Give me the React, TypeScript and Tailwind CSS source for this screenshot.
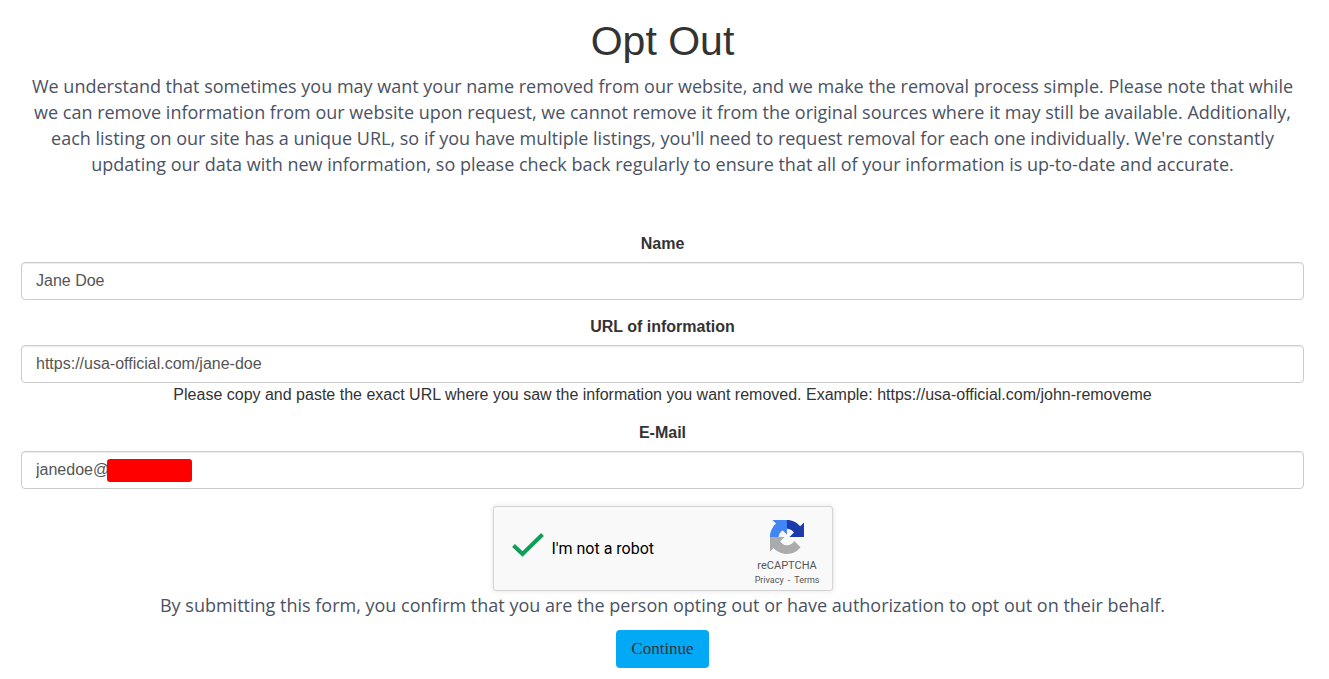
import { useState } from "react";

const inputClass =
  "h-[38px] w-full rounded border border-[#ccc] bg-white px-3.5 text-base text-[#555] shadow-[inset_0_1px_1px_rgba(0,0,0,0.075)] outline-none focus:border-[#66afe9]";
const labelClass = "mb-1.5 text-base leading-6 font-bold";
const textClass = "font-['Open_Sans',sans-serif] text-lg leading-[26px] text-[#4a5264]";

function CaptchaLogo() {
  return (
    <svg viewBox="0 0 64 64" className="h-[34px] w-[34px]" aria-hidden="true">
      <path
        fill="#1c3aa9"
        d="M64 31.955l-.033-1.37V4.687l-7.16 7.16C50.948 4.674 42.033.093 32.05.093c-10.4 0-19.622 4.96-25.458 12.64l11.736 11.86a15.55 15.55 0 0 1 4.754-5.334c2.05-1.6 4.952-2.906 8.968-2.906.485 0 .86.057 1.135.163 4.976.393 9.288 3.14 11.828 7.124l-8.307 8.307L64 31.953"
      />
      <path
        fill="#4285f4"
        d="M31.862.094l-1.37.033H4.594l7.16 7.16C4.58 13.147 0 22.06 0 32.046c0 10.4 4.96 19.622 12.64 25.458L24.5 45.768a15.55 15.55 0 0 1-5.334-4.754c-1.6-2.05-2.906-4.952-2.906-8.968 0-.485.057-.86.163-1.135.393-4.976 3.14-9.288 7.124-11.828l8.307 8.307L31.86.095"
      />
      <path
        fill="#ababab"
        d="M.001 32.045l.033 1.37v25.898l7.16-7.16c5.86 7.173 14.774 11.754 24.76 11.754 10.4 0 19.622-4.96 25.458-12.64l-11.736-11.86a15.55 15.55 0 0 1-4.754 5.334c-2.05 1.6-4.952 2.906-8.968 2.906-.485 0-.86-.057-1.135-.163-4.976-.393-9.288-3.14-11.828-7.124l8.307-8.307c-10.522.04-22.4.066-27.295-.005"
      />
    </svg>
  );
}

function Captcha() {
  const [checked, setChecked] = useState(true);

  return (
    <div className="flex h-[85px] w-[340px] items-center justify-between rounded-[3px] border border-[#d3d3d3] bg-[#f9f9f9] pr-3 pl-[18px] font-[Roboto,sans-serif] shadow-[0_0_4px_1px_rgba(0,0,0,0.08)]">
      <label htmlFor="robot" className="flex items-center gap-2 text-base leading-5 text-black">
        <span className="grid h-8 w-8 place-items-center">
          <input
            id="robot"
            type="checkbox"
            checked={checked}
            onChange={(e) => setChecked(e.target.checked)}
            className="col-start-1 row-start-1 h-7 w-7 appearance-none rounded-xs border-2 border-[#c1c1c1] bg-white checked:border-0 checked:bg-transparent"
          />
          {checked && (
            <svg viewBox="0 0 32 32" className="pointer-events-none col-start-1 row-start-1 h-8 w-8">
              <path d="M1.5 12.5 10.5 21 30.5 1.5" fill="none" stroke="#0f9d58" strokeWidth="4" />
            </svg>
          )}
        </span>
        I'm not a robot
      </label>
      <div className="flex flex-col items-center pt-2 text-[#555]">
        <CaptchaLogo />
        <span className="mt-1 text-[11px] leading-4">reCAPTCHA</span>
        <span className="flex gap-1 text-[9px] leading-3">
          <a href="#privacy">Privacy</a>
          <span>-</span>
          <a href="#terms">Terms</a>
        </span>
      </div>
    </div>
  );
}

export default function App() {
  const [name, setName] = useState("Jane Doe");
  const [url, setUrl] = useState("https://usa-official.com/jane-doe");
  const [email, setEmail] = useState("janedoe@");

  return (
    <main className="pt-4 pr-[25px] pb-3 pl-[21px] text-center font-['Liberation_Sans',Arial,sans-serif] text-[#333]">
      <h1 className="mb-[7px] text-[41px] leading-[50px]">Opt Out</h1>
      <p className={textClass}>
        We understand that sometimes you may want your name removed from our website, and we make the removal process
        simple. Please note that while we can remove information from our website upon request, we cannot remove it from
        the original sources where it may still be available. Additionally, each listing on our site has a unique URL, so
        if you have multiple listings, you'll need to request removal for each one individually. We're constantly
        updating our data with new information, so please check back regularly to ensure that all of your information is
        up-to-date and accurate.
      </p>

      <form className="mt-[55px] flex flex-col gap-[15px]" onSubmit={(e) => e.preventDefault()}>
        <div className="flex flex-col">
          <label htmlFor="name" className={labelClass}>
            Name
          </label>
          <input id="name" type="text" value={name} onChange={(e) => setName(e.target.value)} className={inputClass} />
        </div>

        <div className="flex flex-col">
          <label htmlFor="url" className={labelClass}>
            URL of information
          </label>
          <input id="url" type="text" value={url} onChange={(e) => setUrl(e.target.value)} className={inputClass} />
          <p className="text-base leading-[23px]">
            Please copy and paste the exact URL where you saw the information you want removed. Example:
            https://usa-official.com/john-removeme
          </p>
        </div>

        <div className="flex flex-col">
          <label htmlFor="email" className={labelClass}>
            E-Mail
          </label>
          <div className="relative">
            <input
              id="email"
              type="text"
              value={email}
              onChange={(e) => setEmail(e.target.value)}
              className={inputClass}
            />
            <span className="absolute top-2 left-[86px] h-[23px] w-[85px] rounded-[3px] bg-[#f00]" />
          </div>
        </div>

        <div className="flex flex-col items-center pt-0.5">
          <Captcha />
          <p className={`mt-px ${textClass}`}>
            By submitting this form, you confirm that you are the person opting out or have authorization to opt out on
            their behalf.
          </p>
          <button
            type="submit"
            className="mt-3 h-[38px] rounded bg-[#03a9f4] px-[15px] font-['Liberation_Serif',serif] text-[17px] text-[#333]"
          >
            Continue
          </button>
        </div>
      </form>
    </main>
  );
}
